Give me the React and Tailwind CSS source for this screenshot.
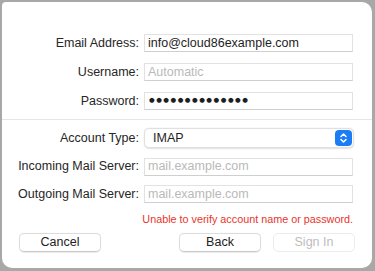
import React from 'react';

const font = { fontFamily: '"Liberation Sans", Arial, sans-serif' };

const Field = ({ label, children }) => (
  <div className="flex items-center">
    <div className="w-[142px] pr-[5px] text-right text-[12.5px] text-[#262626]">{label}</div>
    {children}
  </div>
);

const TextBox = ({ value, placeholder }) => (
  <div className="flex h-[18px] w-[209px] items-center border border-[#e2e2e2] border-b-[#cfcfcf] bg-white px-[3px] text-[12.5px]">
    {value ? (
      <span className="text-[#1e1e1e]">{value}</span>
    ) : (
      <span className="text-[#b9b9b9]">{placeholder}</span>
    )}
  </div>
);

const Stepper = () => (
  <div className="flex h-[16px] w-[17px] items-center justify-center rounded-[4px] bg-[#1b7cf6]">
    <svg width="9" height="12" viewBox="0 0 9 12" fill="none" stroke="white" strokeWidth="1.5" strokeLinecap="round" strokeLinejoin="round">
      <path d="M2 4.5 L4.5 2 L7 4.5" />
      <path d="M2 7.5 L4.5 10 L7 7.5" />
    </svg>
  </div>
);

const Button = ({ children, disabled }) => (
  <button
    className={
      disabled
        ? 'h-[19px] w-[82px] rounded-[5px] border border-[#ececec] bg-white text-[12.5px] leading-none text-[#bdbdbd]'
        : 'h-[19px] w-[82px] rounded-[5px] border border-[#dcdcdc] border-b-[#c8c8c8] bg-white text-[12.5px] leading-none text-[#222] shadow-[0_0.5px_1px_rgba(0,0,0,0.08)]'
    }
  >
    {children}
  </button>
);

export default function App() {
  return (
    <div className="h-[271px] w-[375px] bg-[#a8a8a8] pb-[3px] pl-[2px] pr-[3px] pt-[2px]" style={font}>
      <div className="flex h-full w-full flex-col rounded-[10px] rounded-tl-[4px] bg-white">
        <div className="flex flex-col gap-[10px] pt-[32px]">
          <Field label="Email Address:">
            <TextBox value="info@cloud86example.com" />
          </Field>
          <Field label="Username:">
            <TextBox placeholder="Automatic" />
          </Field>
          <Field label="Password:">
            <div className="flex h-[18px] w-[209px] items-center border border-[#e2e2e2] border-b-[#cfcfcf] bg-white px-[4px]">
              <span className="text-[6.5px] tracking-[1.5px] text-[#1e1e1e]" style={{ fontFamily: '"DejaVu Sans", sans-serif' }}>
                ●●●●●●●●●●●●●●
              </span>
            </div>
          </Field>
        </div>

        <div className="mt-[9px] h-px bg-[#e6e6e6]" />

        <div className="flex flex-col gap-[9px] pt-[8px]">
          <Field label="Account Type:">
            <div className="flex h-[20px] w-[210px] items-center justify-between rounded-[5px] border border-[#e0e0e0] bg-white pl-[8px] pr-[1px] text-[12.5px] text-[#1e1e1e] shadow-[0_0.5px_1.5px_rgba(0,0,0,0.12)]">
              <span>IMAP</span>
              <Stepper />
            </div>
          </Field>
          <Field label="Incoming Mail Server:">
            <TextBox placeholder="mail.example.com" />
          </Field>
          <Field label="Outgoing Mail Server:">
            <TextBox placeholder="mail.example.com" />
          </Field>
        </div>

        <div className="mt-[7px] h-[16px] w-[351px] text-right text-[10.8px] leading-[16px] text-[#e8352b]">
          Unable to verify account name or password.
        </div>

        <div className="mt-[6px] flex items-center pl-[17px]">
          <Button>Cancel</Button>
          <div className="ml-[78px] flex gap-[12px]">
            <Button>Back</Button>
            <Button disabled>Sign In</Button>
          </div>
        </div>
      </div>
    </div>
  );
}
